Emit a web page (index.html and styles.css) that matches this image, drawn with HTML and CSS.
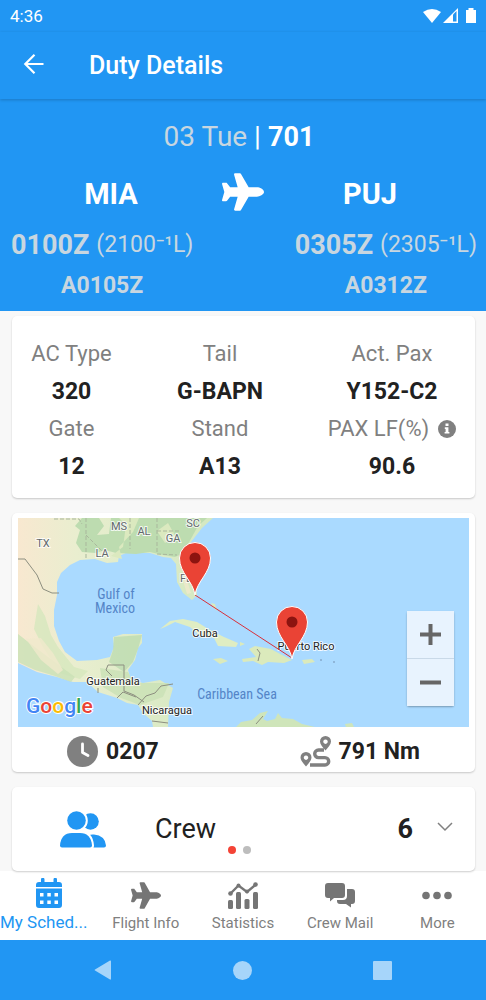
FILE: index.html
```html
<!DOCTYPE html>
<html lang="en">
  <head>
    <meta charset="UTF-8">
    <title>Duty Details</title>
    <meta name="viewport" content="width=device-width, initial-scale=1.0">
    <link rel="stylesheet" href="styles.css">
  </head>
  <body>
    <div class="status-bar">
      <span>4:36</span>
      <svg class="status-icons" width="55" height="18" viewBox="0 0 55 18" fill="#fff">
        <path d="M0 5Q9-1 18 5L9 16z"/>
        <path d="M20 16L35 1v15z"/>
        <path d="M30 7.500L33.500 4v10.500H30z" fill="#2196f3"/>
        <path d="M43 3h2.500V1h5v2H53v13H43z"/>
      </svg>
    </div>

    <header class="app-bar">
      <button type="button" class="back-button" aria-label="Back">
        <svg width="22" height="22" viewBox="0 0 22 22" fill="none" stroke="#fff" stroke-width="2.200">
          <path d="M20.500 11H2.500M11.500 1.800L2.300 11l9.200 9.200"/>
        </svg>
      </button>
      <h1>Duty Details</h1>
    </header>

    <section class="flight">
      <p class="flight-date"><span class="muted">03 Tue</span> | <strong>701</strong></p>
      <div class="route">
        <span class="airport">MIA</span>
        <svg class="route-plane" viewBox="0 0 576 512" fill="#fff">
          <path d="M480 192H365.710L260.610 8.060A16.014 16.014 0 0 0 246.710 0h-65.500c-10.630 0-18.300 10.170-15.380 20.390L214.860 192H112l-43.200-57.600c-3.020-4.030-7.770-6.400-12.800-6.400H16.010C5.600 128-2.040 137.780.490 147.880L32 256 .490 364.120C-2.040 374.220 5.600 384 16.010 384H56c5.040 0 9.780-2.370 12.800-6.400L112 320h102.860l-49.030 171.600c-2.920 10.220 4.750 20.400 15.380 20.400h65.500c5.740 0 11.040-3.080 13.890-8.060L365.710 320H480c35.350 0 96-28.650 96-64s-60.650-64-96-64z"/>
        </svg>
        <span class="airport">PUJ</span>
      </div>
      <div class="times">
        <div class="time">
          <p class="planned"><strong>0100Z</strong> <span>(2100⁻¹L)</span></p>
          <p class="actual">A0105Z</p>
        </div>
        <div class="time">
          <p class="planned"><strong>0305Z</strong> <span>(2305⁻¹L)</span></p>
          <p class="actual">A0312Z</p>
        </div>
      </div>
    </section>

    <main class="content">
      <dl class="card info">
        <div><dt>AC Type</dt><dd>320</dd></div>
        <div><dt>Tail</dt><dd>G-BAPN</dd></div>
        <div><dt>Act. Pax</dt><dd>Y152-C2</dd></div>
        <div><dt>Gate</dt><dd>12</dd></div>
        <div><dt>Stand</dt><dd>A13</dd></div>
        <div>
          <dt>PAX LF(%)
            <svg class="info-icon" width="18" height="18" viewBox="0 0 18 18">
              <circle cx="9" cy="9" r="9" fill="#808080"/>
              <path d="M7.500 3.500h3v2.600h-3zM6.800 7.300h3.600v4.600h1v1.700H6.600v-1.700h1V9h-.8z" fill="#fff"/>
            </svg>
          </dt>
          <dd>90.6</dd>
        </div>
      </dl>

      <section class="card map-card">
        <div class="map">
          <svg class="map-image" viewBox="0 0 451 209">
            <defs>
              <linearGradient id="dry" x1="0" x2="1">
                <stop offset="0" stop-color="#f8e8d0"/>
                <stop offset="0.300" stop-color="#e9eecf"/>
                <stop offset="1" stop-color="#d3e8c0"/>
              </linearGradient>
              <g id="pin">
                <path d="M0 0C-2-14-15.500-22-15.500-37a15.500 15.500 0 0 1 31 0C15.500-22 2-14 0 0z" fill="#ea4335" stroke="#fff" stroke-width="1"/>
                <circle cy="-37" r="5.500" fill="#8c1410"/>
              </g>
            </defs>
            <rect width="451" height="209" fill="#aadaff"/>

            <!-- mainland -->
            <path fill="url(#dry)" d="M0 0H195L184 10 173 24 168 33 172 48 178 65 179 77 174 82 165 75 159 64 158 46 153 40 145 39 132 35 119 35 108 35 101 38 100 44 89 45 77 41 62 42 52 47 43 55 39 64 39 77 36 92 36 108 41 123 47 134 59 143 79 142 92 139 96 129 95 119 105 116 124 116 124 125 120 130 117 142 110 152 113 162 125 165 142 162 155 170 151 184 150 209H135L134 203 125 195 120 187 109 185 99 180 80 174 69 164 55 164 39 159 19 154 0 145z"/>
            <path fill="#bddcb0" d="M64 0h17l5 8-7 9 12-1 2-16h96l-9 8-10 18-4 9-9 4-12-2-13-3-14 2-20-1-11-3-9 3-14-1-6-9 4-13-5-4z"/>
            <path fill="#dbe9bf" d="M101 0l7 7-3 22-12 9 11 3-3-12 14-15 6-14zM139 13l8 12 11-6-8-14z"/>
            <path fill="#bddcb0" d="M96 119l28-2-4 14-5 13-9 10-15-10 4-12z" opacity="0.800"/>
            <path fill="#d6e7bd" d="M20 86l7 12 6 19 7 12 16 20 14 4-8 8-20-6-17-26-9-18z" opacity="0.800"/>
            <path fill="#c9e1b5" d="M0 116l18 14 20 15 19 14-4 5-16-6-20-6-17-8zM82 150l28 4 6 11 35 0-6 14-23 8-19-7-18-11z" opacity="0.800"/>
            <path fill="#f0e9cc" d="M8 121l15-1 12 15 10 17-5 4-17-14zM163 56l5 3 5 16-4 1z" opacity="0.800"/>

            <!-- islands -->
            <path fill="#dfedc3" d="M142 111l10-8 13-2 14 3 13 8 14 7 14 6-2 4-18-1-4-8-15-3-9-8-15-5-10 5z"/>
            <path fill="#dbeabc" d="M195 141l8-1 7 3-8 3zM224 141l14-2-7-8 6-3 16 3 11 6 10 5-8 3-16-1-6 3-9-4-10 1zM284 142l10-1 3 3-11 2zM193 85l4 1 2 7-4-4zM222 124l5 2-5 2z"/>
            <path fill="#cfe5ba" d="M218 209l5-5 11-2 8-7 8-2-5 8 4 2 8-2 3-6 4 5 11 1 9 5 13 3zM327 206l7-1 2 4h-8z"/>
            <g fill="#86aacd">
              <circle cx="303" cy="142" r="1"/>
              <circle cx="316" cy="144" r="1"/>
            </g>

            <!-- borders -->
            <g fill="none" stroke="#8d8f80" stroke-width="1">
              <path d="M0 41h7l12 16 6 14 9 4h7M90 147h16v26l10 4 10 7M90 147l-2 5 6 6M80 170v5M99 180l6-6 13 5M120 187l8-9 9-3 6-7 12-2M134 203l16 2M239 131l3 4-2 8M238 206l7-8"/>
              <path stroke="#a9b79c" stroke-dasharray="4 2" d="M36 1h25l3 5M68 0v40M68 17l17 17M112 0v31M139 0v36l20 1M139 13h23"/>
            </g>

            <g class="map-states">
              <text x="25" y="29">TX</text>
              <text x="84" y="39">LA</text>
              <text x="101" y="12">MS</text>
              <text x="126" y="17">AL</text>
              <text x="155" y="24">GA</text>
              <text x="175" y="9">SC</text>
              <text x="168" y="64">FL</text>
            </g>
            <g class="map-seas">
              <text x="98" y="81">Gulf of</text>
              <text x="97" y="95">Mexico</text>
              <text x="219" y="181">Caribbean Sea</text>
            </g>
            <g class="map-places">
              <text x="187" y="119">Cuba</text>
              <text x="95" y="167">Guatemala</text>
              <text x="149" y="196">Nicaragua</text>
              <text x="288" y="132">Puerto Rico</text>
            </g>
            <path d="M177 77L274 140" stroke="#d8303a" stroke-width="1"/>
            <use href="#pin" x="177" y="77"/>
            <use href="#pin" x="274" y="141"/>
            <text class="map-logo" x="8" y="195"><tspan fill="#4285f4">G</tspan><tspan fill="#ea4335">o</tspan><tspan fill="#fbbc05">o</tspan><tspan fill="#4285f4">g</tspan><tspan fill="#34a853">l</tspan><tspan fill="#ea4335">e</tspan></text>
          </svg>
          <div class="map-zoom">
            <button type="button" aria-label="Zoom in">
              <svg width="21" height="21" viewBox="0 0 21 21" fill="#666"><path d="M0 8.500h8.500V0h4v8.500H21v4h-8.500V21h-4v-8.500H0z"/></svg>
            </button>
            <button type="button" aria-label="Zoom out">
              <svg width="21" height="21" viewBox="0 0 21 21" fill="#666"><path d="M0 8.500h21v4H0z"/></svg>
            </button>
          </div>
        </div>
        <div class="map-stats">
          <span class="stat">
            <svg width="31" height="31" viewBox="0 0 31 31">
              <circle cx="15.500" cy="15.500" r="15.500" fill="#808080"/>
              <path d="M15.500 8v8.500l5.500 3" fill="none" stroke="#fff" stroke-width="2.800" stroke-linecap="round" stroke-linejoin="round"/>
            </svg>
            0207
          </span>
          <span class="stat">
            <svg width="31" height="31" viewBox="0 0 31 31">
              <path d="M24 14h-5.500a3.800 3.800 0 0 0 0 7.600H25a3.700 3.700 0 0 1 0 7.400H10" fill="none" stroke="#808080" stroke-width="3.400"/>
              <path fill="#808080" fill-rule="evenodd" d="M25.500 0a5.500 5.500 0 0 1 5.500 5.500c0 3-3 6-5.500 9-2.500-3-5.500-6-5.500-9A5.500 5.500 0 0 1 25.500 0zm0 3.500a2.200 2.200 0 1 0 .010 0zM6 16a5.500 5.500 0 0 1 5.500 5.500c0 3-3 6-5.500 9-2.500-3-5.500-6-5.500-9A5.500 5.500 0 0 1 6 16zm0 3.500a2.200 2.200 0 1 0 .010 0z"/>
            </svg>
            791 Nm
          </span>
        </div>
      </section>

      <button type="button" class="card crew">
        <svg width="46" height="37" viewBox="0 0 46 37" fill="#2196f3">
          <circle cx="30.500" cy="10.500" r="8.300"/>
          <path d="M26 36.500V25q4-2 8-1.500 11 1 12 11 0 2-2 2z"/>
          <g stroke="#fff" stroke-width="4" paint-order="stroke">
            <circle cx="16.500" cy="9.500" r="9.300"/>
            <path d="M2 36.500q-2 0-2-2Q1 22 12 22h8q11 0 12 12.500 0 2-2 2z"/>
          </g>
        </svg>
        <span class="crew-label">Crew</span>
        <strong>6</strong>
        <svg width="16" height="14" viewBox="0 0 16 14" fill="none" stroke="#808080" stroke-width="1.500"><path d="M1 1l7 7 7-7"/></svg>
      </button>

      <div class="page-dots">
        <span class="dot active"></span>
        <span class="dot"></span>
      </div>
    </main>

    <nav class="tabs">
      <a href="#schedule" class="tab active">
        <svg width="26" height="30" viewBox="0 0 26 30" fill="#2196f3">
          <path d="M5 4V1.500a1.500 1.500 0 0 1 3.500 0V4h9V1.500a1.500 1.500 0 0 1 3.500 0V4h2a3 3 0 0 1 3 3v2H0V7a3 3 0 0 1 3-3zM0 10.500h26V27a3 3 0 0 1-3 3H3a3 3 0 0 1-3-3z"/>
          <path fill="#fff" d="M4 15h3.500v3.500H4zM11.300 15h3.500v3.500h-3.500zM18.500 15H22v3.500h-3.500zM4 22.500h3.500V26H4zM11.300 22.500h3.500V26h-3.500zM18.500 22.500H22V26h-3.500z"/>
        </svg>
        <span>My Sched...</span>
      </a>
      <a href="#flight" class="tab">
        <svg width="30" height="27" viewBox="0 0 576 512" fill="#757575">
          <path d="M480 192H365.710L260.610 8.060A16.014 16.014 0 0 0 246.710 0h-65.500c-10.630 0-18.300 10.170-15.380 20.390L214.860 192H112l-43.200-57.600c-3.020-4.030-7.770-6.400-12.800-6.400H16.010C5.600 128-2.040 137.780.490 147.880L32 256 .490 364.120C-2.040 374.220 5.600 384 16.010 384H56c5.040 0 9.780-2.370 12.800-6.400L112 320h102.860l-49.030 171.600c-2.920 10.220 4.750 20.400 15.380 20.400h65.500c5.740 0 11.040-3.080 13.890-8.060L365.710 320H480c35.350 0 96-28.650 96-64s-60.650-64-96-64z"/>
        </svg>
        <span>Flight Info</span>
      </a>
      <a href="#statistics" class="tab">
        <svg width="30" height="27" viewBox="0 0 30 27" fill="#757575">
          <rect x="0" y="18" width="5" height="9" rx="1.500"/>
          <rect x="8" y="10" width="5" height="17" rx="1.500"/>
          <rect x="16.500" y="17" width="5" height="10" rx="1.500"/>
          <rect x="25" y="10" width="5" height="17" rx="1.500"/>
          <path d="M2.500 11.500l8-8 8.500 6.500 9-7.500" fill="none" stroke="#757575" stroke-width="2.400"/>
          <circle cx="2.500" cy="11.500" r="2.300"/>
          <circle cx="10.500" cy="3.500" r="2"/>
          <circle cx="19" cy="9.500" r="2"/>
          <circle cx="27.500" cy="2.500" r="2.300"/>
        </svg>
        <span>Statistics</span>
      </a>
      <a href="#mail" class="tab">
        <svg width="30" height="27" viewBox="0 0 30 27" fill="#757575">
          <path d="M3 1h14a3 3 0 0 1 3 3v9a3 3 0 0 1-3 3H9l-4 3.500V16H3a3 3 0 0 1-3-3V4a3 3 0 0 1 3-3z"/>
          <path d="M22 7h5a3 3 0 0 1 3 3v9a3 3 0 0 1-3 3h-1v3.500L21 22h-6a3 3 0 0 1-3-3v-1h6q4 0 4-4z"/>
        </svg>
        <span>Crew Mail</span>
      </a>
      <a href="#more" class="tab">
        <svg width="30" height="27" viewBox="0 0 30 27" fill="#757575">
          <circle cx="4" cy="13.500" r="3.800"/>
          <circle cx="15" cy="13.500" r="3.800"/>
          <circle cx="26" cy="13.500" r="3.800"/>
        </svg>
        <span>More</span>
      </a>
    </nav>

    <div class="system-nav">
      <button type="button" aria-label="System back"><svg width="18" height="20" viewBox="0 0 18 20" fill="#a6d5fa"><path d="M16 0.500q1-.5 1 1v17q0 1.500-1 1L1 10.500q-1-.5 0-1z"/></svg></button>
      <button type="button" aria-label="Home"><svg width="19" height="19" viewBox="0 0 19 19" fill="#a6d5fa"><circle cx="9.500" cy="9.500" r="9.500"/></svg></button>
      <button type="button" aria-label="Recent apps"><svg width="19" height="19" viewBox="0 0 19 19" fill="#a6d5fa"><rect width="19" height="19" rx="1"/></svg></button>
    </div>
  </body>
</html>
```

FILE: styles.css
```css
* {
    box-sizing: border-box;
}

body {
    display: flex;
    flex-direction: column;
    min-height: 100vh;
    margin: 0;
    font-family: Roboto, sans-serif;
    color: #212121;
    background-color: #f8f8f8;
}

h1, p, dl, dd {
    margin: 0;
}

button {
    border: none;
    padding: 0;
    background: none;
    font: inherit;
    color: inherit;
    cursor: pointer;
}

svg {
    display: block;
    flex-shrink: 0;
}

.status-bar {
    display: flex;
    justify-content: space-between;
    align-items: center;
    height: 32px;
    padding: 0 8px 0 10px;
    font-size: 17px;
    color: #fff;
    background-color: #2196f3;
}

.app-bar {
    position: relative;
    display: flex;
    align-items: center;
    gap: 44px;
    height: 67px;
    padding: 0 23px;
    color: #fff;
    background-color: #2196f3;
    box-shadow: 0 1px 3px rgba(0, 0, 0, 0.2);
}

.back-button {
    padding-bottom: 4px;
}

.app-bar h1 {
    font-size: 25px;
    font-weight: 500;
}

.flight {
    padding: 21px 0 3px;
    text-align: center;
    color: #fff;
    background-color: #2196f3;
}

.flight-date {
    padding-right: 8px;
    font-size: 28px;
    line-height: 34px;
}

.flight-date strong {
    font-size: 27px;
}

.muted,
.time {
    color: #c8d6e0;
}

.route {
    display: grid;
    grid-template-columns: 22fr 42px 21fr;
    align-items: center;
    height: 72px;
    padding: 8px 10px 0 0;
}

.airport {
    font-size: 29px;
    font-weight: bold;
}

.route-plane {
    width: 42px;
    height: 38px;
    margin-bottom: 5px;
}

.times {
    display: flex;
    justify-content: space-between;
    padding: 0 9px 0 11px;
}

.time {
    font-size: 23px;
}

.planned {
    display: flex;
    align-items: center;
    gap: 7px;
    line-height: 38px;
}

.planned strong {
    font-size: 27px;
}

.time .actual {
    line-height: 44px;
    font-weight: bold;
}

.content {
    position: relative;
    display: flex;
    flex: 1;
    flex-direction: column;
    gap: 15px;
    padding: 5px 11px 0 12px;
}

.card {
    border-radius: 5px;
    background-color: #fff;
    box-shadow: 0 1px 2px rgba(0, 0, 0, 0.2);
}

.info {
    display: grid;
    grid-template-columns: 119px 1fr 166px;
    padding: 19px 0 13px;
    font-size: 23px;
    text-align: center;
}

.info dt {
    display: flex;
    justify-content: center;
    align-items: center;
    gap: 9px;
    font-size: 22px;
    line-height: 38px;
    color: #808080;
}

.info dd {
    line-height: 37px;
    font-weight: bold;
}

.map-card {
    padding: 5px 6px 0;
}

.map {
    position: relative;
}

.map-image {
    width: 100%;
    height: auto;
}

.map-states,
.map-seas,
.map-places {
    text-anchor: middle;
    font-size: 11px;
    paint-order: stroke;
    stroke: rgba(255, 255, 255, 0.8);
    stroke-width: 2px;
}

.map-states {
    fill: #62686c;
}

.map-seas {
    font-family: "Roboto Condensed", Roboto, sans-serif;
    font-size: 14px;
    fill: #5485c8;
    stroke: none;
}

.map-places {
    fill: #222;
}

.map-logo {
    font-size: 21px;
    font-weight: 500;
    paint-order: stroke;
    stroke: #fff;
    stroke-width: 2px;
}

.map-zoom {
    position: absolute;
    right: 15px;
    bottom: 21px;
    display: flex;
    flex-direction: column;
    gap: 1px;
    border-radius: 2px;
    background-color: #c9d9e8;
    box-shadow: 0 1px 2px rgba(0, 0, 0, 0.3);
}

.map-zoom button {
    display: flex;
    justify-content: center;
    align-items: center;
    width: 47px;
    height: 47px;
    background-color: #e8f3fe;
}

.map-stats {
    display: flex;
    justify-content: space-between;
    height: 45px;
    padding: 4px 49px 0;
    font-size: 23px;
    font-weight: bold;
}

.stat {
    display: flex;
    align-items: center;
    gap: 8px;
}

.crew {
    display: flex;
    align-items: center;
    height: 84px;
    padding: 0 22px 0 48px;
    font-size: 27px;
    text-align: left;
}

.crew-label {
    flex: 1;
    padding-left: 49px;
}

.crew strong {
    margin-right: 24px;
}

.page-dots {
    position: absolute;
    bottom: 17px;
    left: 0;
    right: 8px;
    display: flex;
    justify-content: center;
    gap: 7px;
}

.dot {
    width: 8px;
    height: 8px;
    border-radius: 50%;
    background-color: #bdbdbd;
}

.dot.active {
    background-color: #f44336;
}

.tabs {
    display: grid;
    grid-template-columns: repeat(5, 1fr);
    height: 69px;
    background-color: #fff;
}

.tab {
    display: flex;
    flex-direction: column;
    justify-content: flex-end;
    align-items: center;
    gap: 4px;
    padding-bottom: 7px;
    font-size: 15px;
    line-height: 20px;
    white-space: nowrap;
    text-decoration: none;
    color: #808080;
}

.tab.active {
    padding-bottom: 8px;
    font-size: 17px;
    color: #2196f3;
}

.tab.active span {
    align-self: flex-start;
}

.system-nav {
    display: flex;
    justify-content: center;
    align-items: center;
    gap: 121px;
    height: 60px;
    background-color: #2196f3;
}
```
